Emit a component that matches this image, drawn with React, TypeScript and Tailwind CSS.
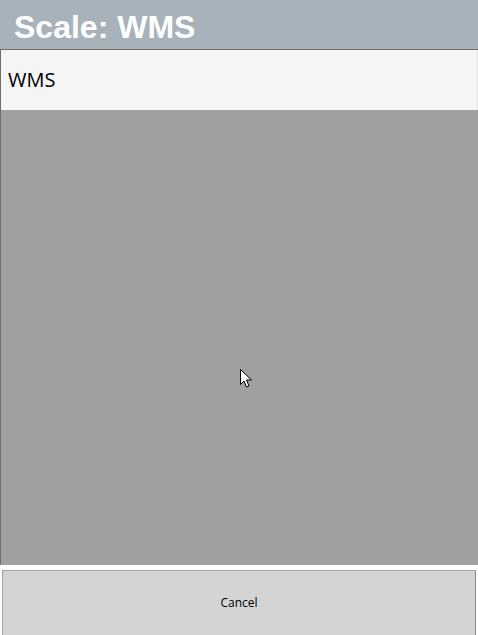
import React from "react";

export default function App() {
  return (
    <div className="w-[478px] h-[635px] flex flex-col bg-white overflow-hidden">
      <div className="h-[49px] shrink-0 bg-[#a8b2bb] flex items-center pl-[14px] pt-[4px]">
        <span
          className="text-white font-bold text-[32px] leading-none"
          style={{ fontFamily: '"Liberation Sans", Arial, sans-serif' }}
        >
          Scale: WMS
        </span>
      </div>
      <div className="h-px shrink-0 bg-[#6e6e6e]" />
      <div className="flex-1 flex flex-col border-l border-[#6e6e6e] relative">
        <div className="h-[60px] shrink-0 bg-[#f5f5f5] border-r border-[#e6e6e6] flex items-center pl-[7px]">
          <span
            className="text-black text-[20px] leading-none"
            style={{ fontFamily: '"Open Sans", "Noto Sans", sans-serif' }}
          >
            WMS
          </span>
        </div>
        <div className="flex-1 bg-[#a0a0a0]" />
        <svg
          className="absolute left-[239px] top-[319px]"
          width="13"
          height="20"
          viewBox="0 0 13 20"
        >
          <path
            d="M0.5 0.5 L0.5 15.5 L4 12 L6.5 18 L9 17 L6.5 11 L11.5 11 Z"
            fill="#ffffff"
            stroke="#000000"
            strokeWidth="1"
          />
        </svg>
      </div>
      <div className="h-[5px] shrink-0 bg-white" />
      <div className="h-[65px] shrink-0 px-[2px] bg-white">
        <button
          className="w-full h-[66px] bg-[#d4d4d4] border border-[#a3a3a3] border-r-[#8a8a8a] flex items-center justify-center pb-px text-[12px] text-black"
          style={{ fontFamily: '"Open Sans", "Noto Sans", sans-serif' }}
        >
          Cancel
        </button>
      </div>
    </div>
  );
}
